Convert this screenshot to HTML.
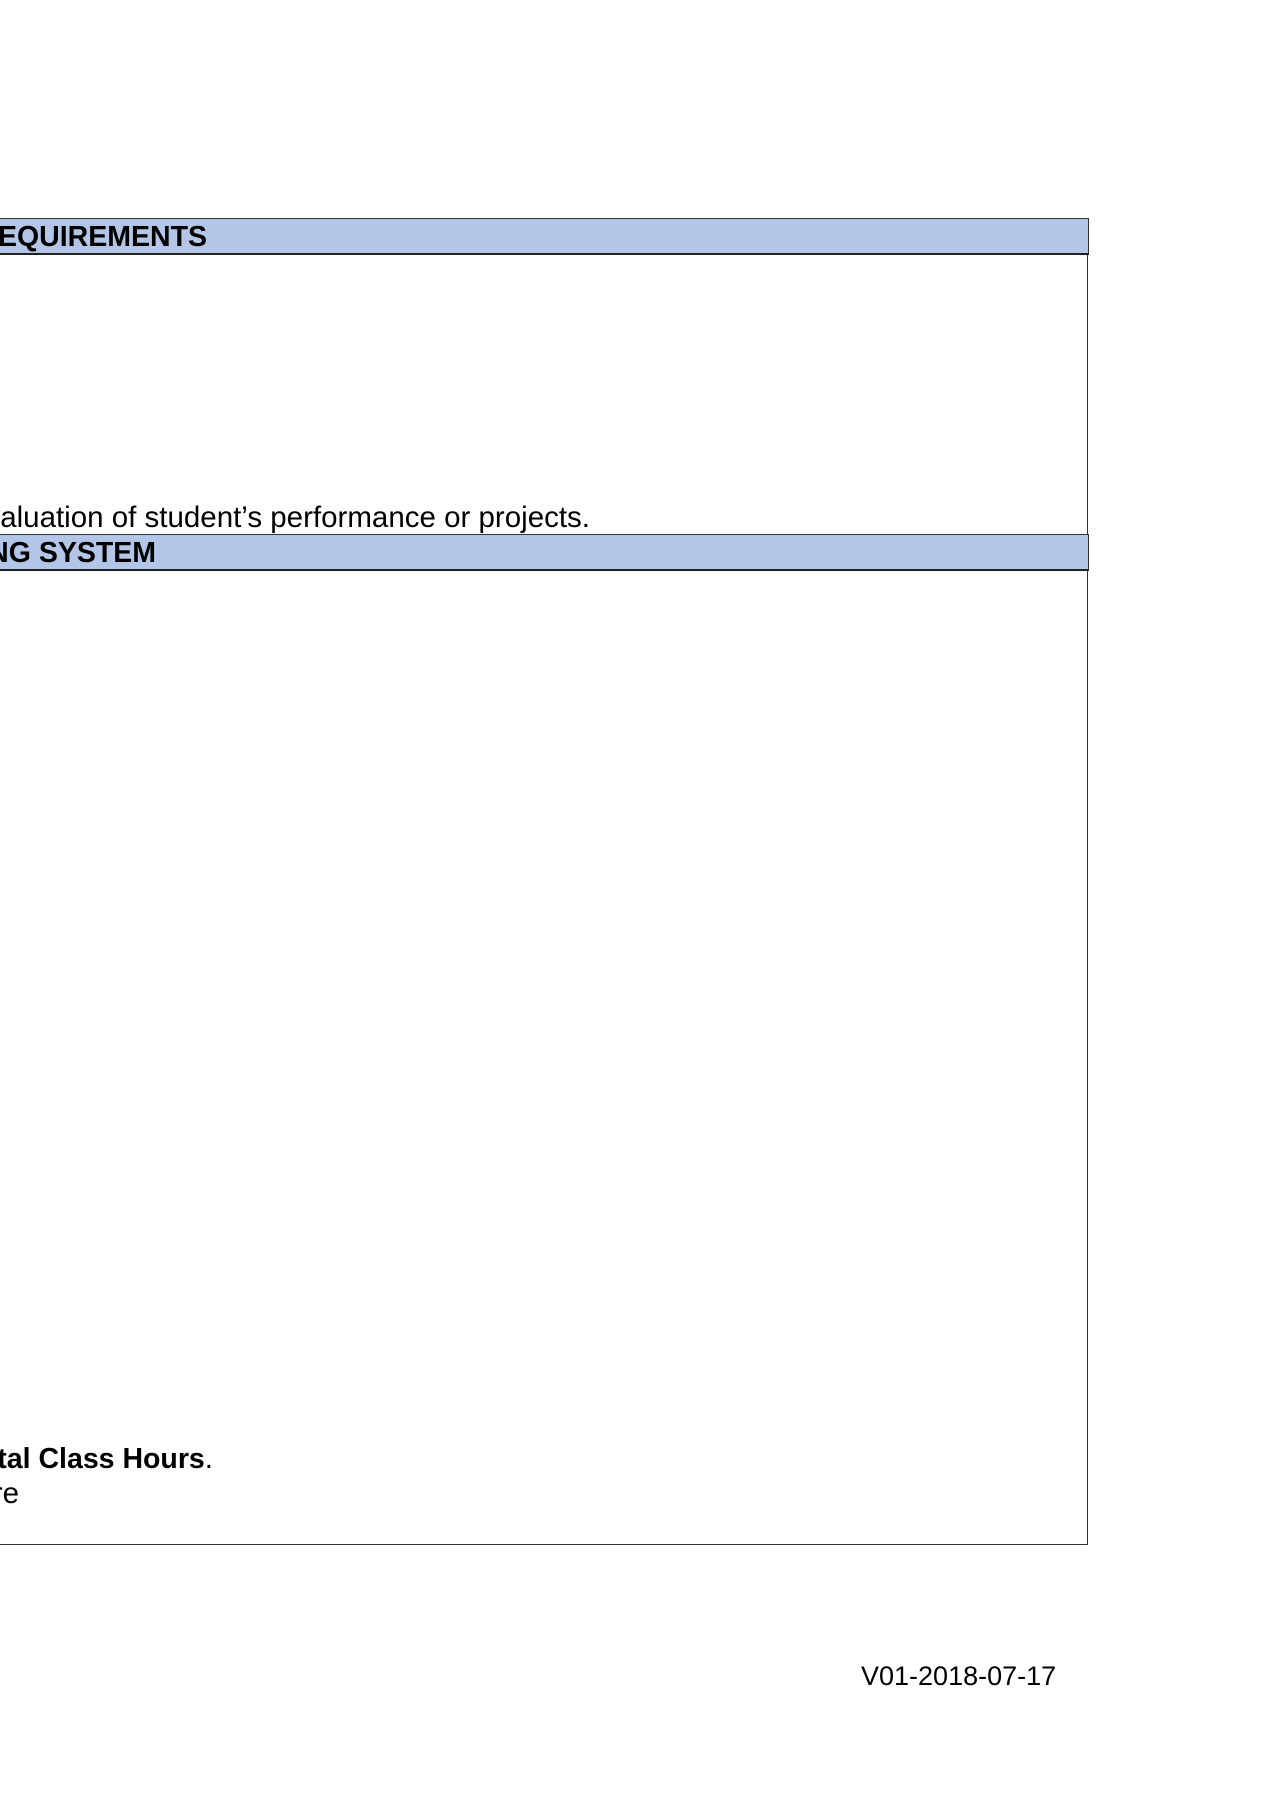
<!DOCTYPE html>
<html><head><meta charset="utf-8"><style>
html,body{margin:0;padding:0;width:1273px;height:1800px;background:#fff;overflow:hidden;position:relative;font-family:"Liberation Sans",Arial,sans-serif;color:#000}
.clip{position:absolute;left:0;top:0;width:1273px;height:1800px;overflow:hidden}
.box{position:absolute;left:-10px;top:218px;width:1098px;height:1327px;border:1px solid #333;box-sizing:border-box}
.hdr{position:absolute;left:-10px;width:1099px;background:#b4c6e7;border-top:1px solid #333;border-bottom:2px solid #222;border-right:1px solid #333;box-sizing:border-box}
.t{position:absolute;white-space:nowrap;font-size:29.5px;line-height:30px}
.b{font-weight:bold;font-size:28.5px}
</style></head><body>
<div class="clip">
<div class="box"></div>
<div class="hdr" style="top:218px;height:37px"></div>
<div class="hdr" style="top:534px;height:37px"></div>
<div class="t b" style="right:1066px;top:222px">REQUIREMENTS</div>
<div class="t" style="right:683px;top:503px">Evaluation of student’s performance or projects.</div>
<div class="t b" style="right:1117px;top:538px">GRADING SYSTEM</div>
<div class="t" style="right:1060px;top:1444px"><b style="font-size:28.5px">Total Class Hours</b>.</div>
<div class="t" style="right:1254px;top:1479px">before</div>
</div>
<div class="t" style="left:861px;top:1662px;font-size:27px;line-height:28px">V01-2018-07-17</div>
</body></html>
